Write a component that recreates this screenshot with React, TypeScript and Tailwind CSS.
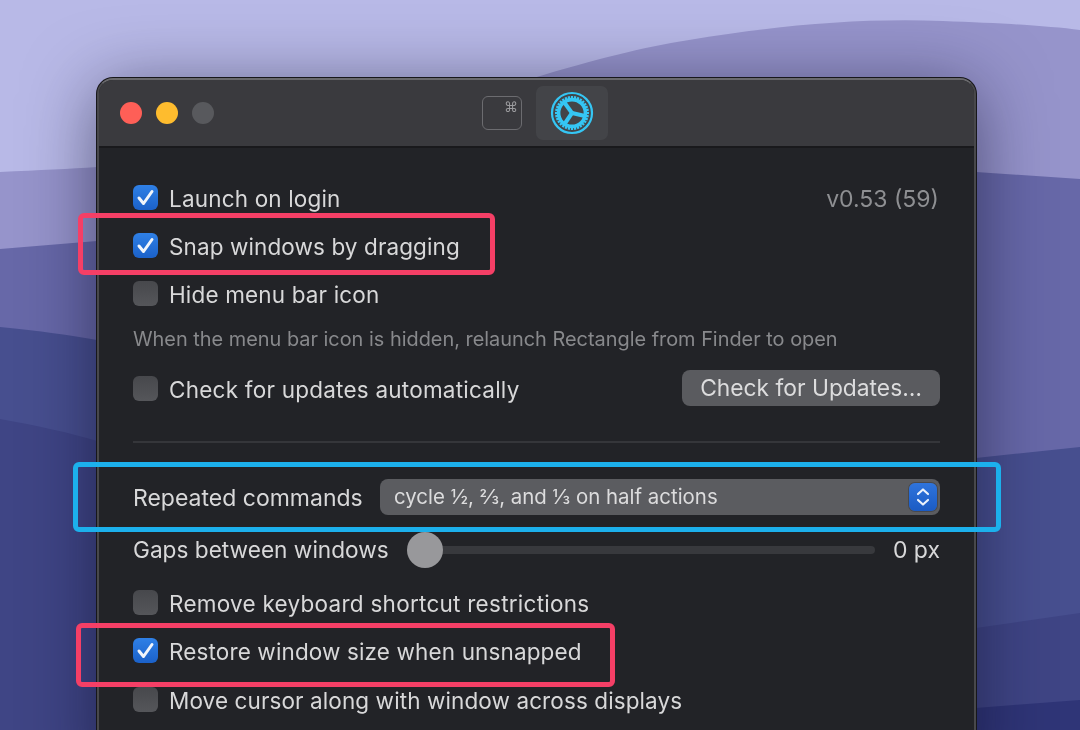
import React from "react";

const font = { fontFamily: '"Inter", "Liberation Sans", sans-serif' };

function Check({ checked }: { checked?: boolean }) {
  return checked ? (
    <span className="flex h-[25px] w-[25px] shrink-0 -translate-y-[1px] items-center justify-center rounded-[6px] bg-gradient-to-b from-[#2f80e6] to-[#1b61c9]">
      <svg width="21" height="21" viewBox="0 0 21 21" fill="none">
        <path d="M4 11 L8.5 16.5 L17 4.5" stroke="#f1f5fb" strokeWidth="3" strokeLinecap="round" strokeLinejoin="round" />
      </svg>
    </span>
  ) : (
    <span className="block h-[25px] w-[25px] shrink-0 -translate-y-[1px] rounded-[6px] bg-gradient-to-b from-[#47484c] to-[#55565a]" />
  );
}

function Row({ checked, label, right, h, track = "tracking-[0.1px]" }: { checked?: boolean; label: string; right?: React.ReactNode; h: string; track?: string }) {
  return (
    <div className={`flex items-center ${h}`}>
      <Check checked={checked} />
      <span className={`ml-[11px] whitespace-nowrap pt-[2px] text-[22.5px] leading-none text-[#d8d8d9] ${track}`}>{label}</span>
      {right}
    </div>
  );
}

function Gear() {
  const teeth = Array.from({ length: 32 }, (_, i) => (i * 360) / 32);
  return (
    <svg width="44" height="44" viewBox="0 0 44 44" fill="none">
      <circle cx="22" cy="22" r="20" stroke="#35c6f4" strokeWidth="2.2" />
      <circle cx="22" cy="22" r="13.4" stroke="#35c6f4" strokeWidth="3.6" />
      {teeth.map((a) => (
        <rect key={a} x="20.9" y="5" width="2.2" height="3.6" fill="#35c6f4" transform={`rotate(${a} 22 22)`} />
      ))}
      <g stroke="#35c6f4" strokeWidth="4" strokeLinecap="butt">
        <path d="M22 22 L35 25" />
        <path d="M22 22 L14 11" />
        <path d="M22 22 L14.5 33" />
      </g>
    </svg>
  );
}

function Frame({ className }: { className: string }) {
  return <div className={`pointer-events-none absolute rounded-[6px] border-[5px] ${className}`} />;
}

export default function App() {
  return (
    <div className="relative h-[730px] w-[1080px] overflow-hidden bg-[#b8b9e7] blur-[0.4px]" style={font}>
      <svg className="absolute inset-0" width="1080" height="730" viewBox="0 0 1080 730">
        <path d="M0 172 C40 170 70 169 97 167 L530 79 C600 58 640 48 689 40 C780 25 860 18 943 21 C1000 23 1050 26 1080 30 L1080 730 L0 730 Z" fill="#9694cb" />
        <path d="M0 249 L97 241 L520 150 L976 172 L1080 179 L1080 730 L0 730 Z" fill="#6768a8" />
        <path d="M0 327 C40 331 70 335 97 340 L700 520 L976 458 L1080 447 L1080 730 L0 730 Z" fill="#474f8f" />
        <path d="M0 419 C40 426 70 433 97 441 L700 700 L976 628 L1080 613 L1080 730 L0 730 Z" fill="#3f4585" />
        <path d="M700 730 L976 708 L1080 700 L1080 730 Z" fill="#2f3577" />
      </svg>

      <div className="relative pl-[97px] pt-[78px]">
        <div className="h-[700px] w-[879px] overflow-hidden rounded-t-[16px] border-x-2 border-t-2 border-x-[#48484b] border-t-[#69696c] bg-[#222327] shadow-[0_0_0_1px_#17171a,0_10px_70px_rgba(12,12,40,0.55)]">
          <div className="flex h-[68px] items-center border-b-2 border-[#19191c] bg-[#3a3a3e] pl-[21px]">
            <span className="h-[22px] w-[22px] rounded-full bg-[#fe5f57]" />
            <span className="ml-[14px] h-[22px] w-[22px] rounded-full bg-[#febc2e]" />
            <span className="ml-[14px] h-[22px] w-[22px] rounded-full bg-[#58595d]" />
            <div className="relative ml-[268px] h-[34px] w-[40px] rounded-[6px] border-[1.5px] border-[#6c6c70]">
              <span className="absolute right-[3px] top-[1px] text-[14px] leading-[18px] text-[#9b9b9e]" style={{ fontFamily: '"DejaVu Sans", sans-serif' }}>⌘</span>
            </div>
            <div className="ml-[14px] flex h-[54px] w-[72px] items-center justify-center rounded-[7px] bg-[#434448]">
              <Gear />
            </div>
          </div>

          <div className="flex flex-col pl-[34px] pr-[34px] pt-[26px]">
            <Row checked label="Launch on login" h="h-[48px]" track="tracking-[0.17px]" right={<span className="ml-auto mr-[1px] pt-[2px] text-[23px] leading-none text-[#8e8f92]">v0.53 (59)</span>} />
            <Row checked label="Snap windows by dragging" h="h-[48px]" />
            <Row label="Hide menu bar icon" h="h-[48px]" track="tracking-[0.15px]" />
            <div className="flex h-[42px] items-center whitespace-nowrap pt-[2px] text-[19.9px] leading-none text-[#88898c]">
              When the menu bar icon is hidden, relaunch Rectangle from Finder to open
            </div>
            <Row
              label="Check for updates automatically"
              h="h-[58px]"
              track="tracking-[0.23px]"
              right={
                <span className="ml-auto flex h-[36px] w-[258px] -translate-y-[1px] items-center justify-center whitespace-nowrap rounded-[8px] bg-[#5a5b5f] text-[22.8px] leading-none text-[#dcdcdd]">
                  Check for Updates…
                </span>
              }
            />
            <div className="mt-[23px] h-[2px] bg-[#35363a]" />
            <div className="mt-[36px] flex h-[36px] items-center">
              <span className="whitespace-nowrap pt-[2px] text-[23px] leading-none text-[#d8d8d9]">Repeated commands</span>
              <div className="ml-auto flex h-[36px] w-[560px] items-center justify-between rounded-[8px] bg-[#5b5c60] pl-[14px] pr-[3px]">
                <span className="whitespace-nowrap text-[20.45px] leading-none text-[#dcdcdd]">cycle ½, ⅔, and ⅓ on half actions</span>
                <span className="flex h-[28px] w-[28px] items-center justify-center rounded-[6px] bg-gradient-to-b from-[#2f74dc] to-[#1b5bc4] shadow-[0_0_0_1px_#48494d]">
                  <svg width="16" height="22" viewBox="0 0 16 22" fill="none" stroke="#eaf1fb" strokeWidth="2.2" strokeLinecap="round" strokeLinejoin="round">
                    <path d="M3 8 L8 3.5 L13 8" />
                    <path d="M3 14 L8 18.5 L13 14" />
                  </svg>
                </span>
              </div>
            </div>
            <div className="mt-[13px] flex h-[44px] items-center">
              <span className="w-[274px] shrink-0 whitespace-nowrap text-[22.65px] leading-none text-[#d8d8d9]">Gaps between windows</span>
              <div className="relative flex h-[36px] w-[468px] shrink-0 items-center">
                <div className="h-[8px] w-full rounded-full bg-[#38393d]" />
                <span className="absolute left-0 top-0 h-[36px] w-[36px] rounded-full bg-[#98989b]" />
              </div>
              <span className="ml-auto whitespace-nowrap text-[23px] leading-none text-[#d8d8d9]">0 px</span>
            </div>
            <div className="mt-[7px]">
              <Row label="Remove keyboard shortcut restrictions" h="h-[48px]" track="tracking-[0.26px]" />
              <Row checked label="Restore window size when unsnapped" h="h-[49px]" track="tracking-[0.13px]" />
              <Row label="Move cursor along with window across displays" h="h-[49px]" />
            </div>
          </div>
        </div>
      </div>

      <Frame className="left-[78px] top-[213px] h-[62px] w-[417px] border-[#f53f66]" />
      <Frame className="left-[73px] top-[462px] h-[70px] w-[928px] border-[#1cb0ec]" />
      <Frame className="left-[76px] top-[623px] h-[64px] w-[539px] border-[#f53f66]" />
    </div>
  );
}
